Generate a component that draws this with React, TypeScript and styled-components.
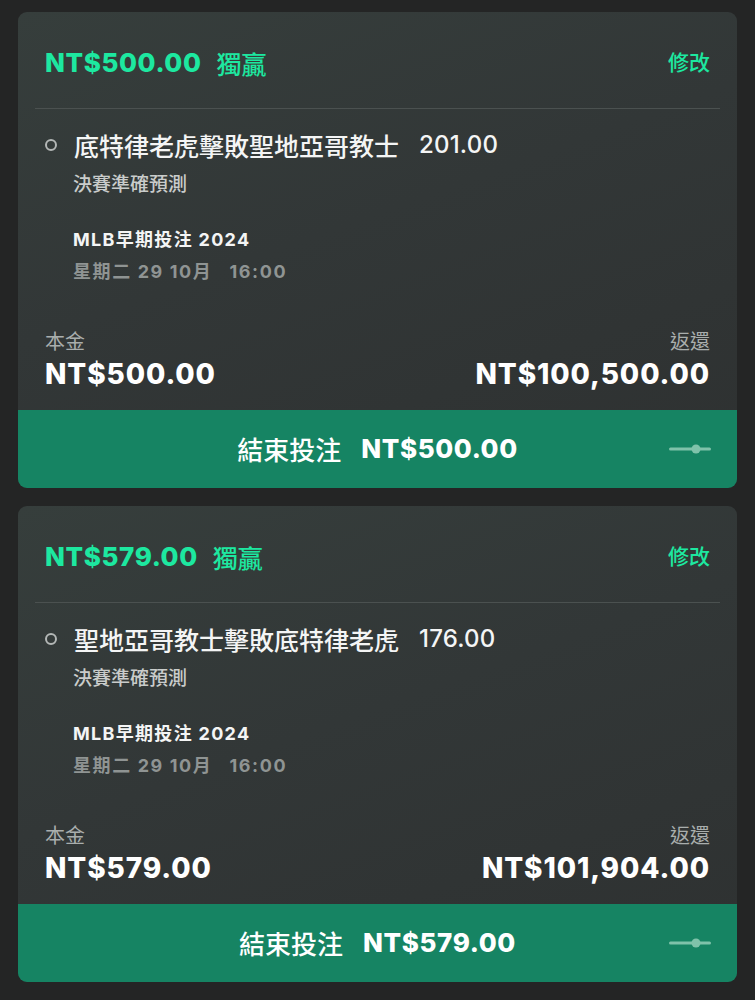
import React from "react";
import styled, { createGlobalStyle } from "styled-components";

const Global = createGlobalStyle`
  html, body { margin: 0; padding: 0; background: #242525; }
  body { font-family: Inter, "Noto Sans CJK TC", sans-serif; -webkit-font-smoothing: antialiased; }
`;

const Page = styled.div`
  display: flex;
  flex-direction: column;
  gap: 18px;
  padding: 12px 18px 18px;
  min-height: 1000px;
  box-sizing: border-box;
  background: #242525;
`;

const Card = styled.div`
  border-radius: 9px;
  overflow: hidden;
  background: linear-gradient(160deg, #363e3c 0%, #323737 45%, #2e3131 100%);
  display: flex;
  flex-direction: column;
`;

const Header = styled.div`
  height: 96px;
  box-sizing: border-box;
  padding: 6px 27px 0 27px;
  display: flex;
  align-items: center;
  justify-content: space-between;
`;

const Stake = styled.div`
  display: flex;
  align-items: center;
  gap: 15px;
  color: #1de8a0;
`;

const StakeAmount = styled.span`
  font-family: Inter, sans-serif;
  font-weight: 800;
  font-size: 26px;
  letter-spacing: 0.6px;
  line-height: 32px;
`;

const BetType = styled.span`
  font-family: "Noto Sans CJK TC", sans-serif;
  font-weight: 500;
  font-size: 25px;
  line-height: 32px;
`;

const Edit = styled.span`
  font-family: "Noto Sans CJK TC", sans-serif;
  font-weight: 500;
  font-size: 21px;
  color: #1de8a0;
  margin-top: -4px;
`;

const Divider = styled.div`
  height: 1px;
  margin: 0 17px;
  background: #4b5150;
`;

const Body = styled.div`
  padding: 20px 27px 0 27px;
  display: flex;
  flex-direction: column;
`;

const SelectionRow = styled.div`
  display: flex;
  align-items: center;
  gap: 17px;
  height: 32px;
`;

const Bullet = styled.span`
  width: 8px;
  height: 8px;
  border-radius: 50%;
  border: 2px solid #b3b7b6;
  flex: none;
`;

const SelectionText = styled.span`
  font-family: "Noto Sans CJK TC", sans-serif;
  font-size: 25px;
  font-weight: 500;
  color: #f4f5f5;
  line-height: 32px;
  display: flex;
  align-items: center;
  gap: 20px;
`;

const Odds = styled.span`
  font-family: Inter, sans-serif;
  font-weight: 500;
  font-size: 24px;
  letter-spacing: 0.2px;
`;

const Indented = styled.div`
  padding-left: 28px;
  display: flex;
  flex-direction: column;
`;

const Market = styled.div`
  font-family: "Noto Sans CJK TC", sans-serif;
  font-size: 19px;
  font-weight: 500;
  color: #c9cccb;
  margin-top: 9px;
  line-height: 26px;
`;

const Event = styled.div`
  font-family: Inter, "Noto Sans CJK TC", sans-serif;
  font-size: 18px;
  font-weight: 700;
  letter-spacing: 1.3px;
  color: #f4f5f5;
  margin-top: 32px;
  line-height: 24px;
`;

const EventDate = styled.div`
  font-family: Inter, "Noto Sans CJK TC", sans-serif;
  font-size: 18px;
  font-weight: 700;
  letter-spacing: 1.6px;
  color: #8f9493;
  margin-top: 8px;
  line-height: 24px;
  display: flex;
  gap: 17px;
`;

const Totals = styled.div`
  margin-top: 44px;
  display: flex;
  justify-content: space-between;
  padding-bottom: 18px;
`;

const TotalCol = styled.div<{ $right?: boolean }>`
  display: flex;
  flex-direction: column;
  align-items: ${(p) => (p.$right ? "flex-end" : "flex-start")};
`;

const TotalLabel = styled.span`
  font-family: "Noto Sans CJK TC", sans-serif;
  font-size: 20px;
  color: #a9aead;
  line-height: 26px;
`;

const TotalValue = styled.span`
  font-family: Inter, sans-serif;
  font-weight: 800;
  font-size: 28px;
  letter-spacing: 0.9px;
  color: #ffffff;
  line-height: 36px;
  margin-top: 2px;
`;

const CashOut = styled.button`
  all: unset;
  height: 78px;
  background: #168463;
  display: flex;
  align-items: center;
  justify-content: center;
  position: relative;
  color: #ffffff;
  gap: 20px;
  cursor: pointer;
`;

const CashLabel = styled.span`
  font-family: "Noto Sans CJK TC", sans-serif;
  font-size: 26px;
  font-weight: 500;
  line-height: 34px;
`;

const CashAmount = styled.span`
  font-family: Inter, sans-serif;
  font-weight: 800;
  font-size: 26px;
  letter-spacing: 0.6px;
  line-height: 34px;
`;

const SliderIcon = styled.svg`
  position: absolute;
  right: 26px;
  top: 50%;
  transform: translateY(-50%);
`;

type Bet = {
  stake: string;
  selection: string;
  odds: string;
  ret: string;
};

const bets: Bet[] = [
  { stake: "NT$500.00", selection: "底特律老虎擊敗聖地亞哥教士", odds: "201.00", ret: "NT$100,500.00" },
  { stake: "NT$579.00", selection: "聖地亞哥教士擊敗底特律老虎", odds: "176.00", ret: "NT$101,904.00" },
];

function BetCard({ bet }: { bet: Bet }) {
  return (
    <Card>
      <Header>
        <Stake>
          <StakeAmount>{bet.stake}</StakeAmount>
          <BetType>獨贏</BetType>
        </Stake>
        <Edit>修改</Edit>
      </Header>
      <Divider />
      <Body>
        <SelectionRow>
          <Bullet />
          <SelectionText>
            <span>{bet.selection}</span>
            <Odds>{bet.odds}</Odds>
          </SelectionText>
        </SelectionRow>
        <Indented>
          <Market>決賽準確預測</Market>
          <Event>MLB早期投注 2024</Event>
          <EventDate>
            <span>星期二 29 10月</span>
            <span>16:00</span>
          </EventDate>
        </Indented>
        <Totals>
          <TotalCol>
            <TotalLabel>本金</TotalLabel>
            <TotalValue>{bet.stake}</TotalValue>
          </TotalCol>
          <TotalCol $right>
            <TotalLabel>返還</TotalLabel>
            <TotalValue>{bet.ret}</TotalValue>
          </TotalCol>
        </Totals>
      </Body>
      <CashOut>
        <CashLabel>結束投注</CashLabel>
        <CashAmount>{bet.stake}</CashAmount>
        <SliderIcon width="42" height="12" viewBox="0 0 42 12">
          <line x1="1.5" y1="6" x2="40.5" y2="6" stroke="#7fc2aa" strokeWidth="3" strokeLinecap="round" />
          <circle cx="27" cy="6" r="4.5" fill="#7fc2aa" />
        </SliderIcon>
      </CashOut>
    </Card>
  );
}

export default function App() {
  return (
    <>
      <Global />
      <Page>
        {bets.map((b) => (
          <BetCard key={b.stake} bet={b} />
        ))}
      </Page>
    </>
  );
}
